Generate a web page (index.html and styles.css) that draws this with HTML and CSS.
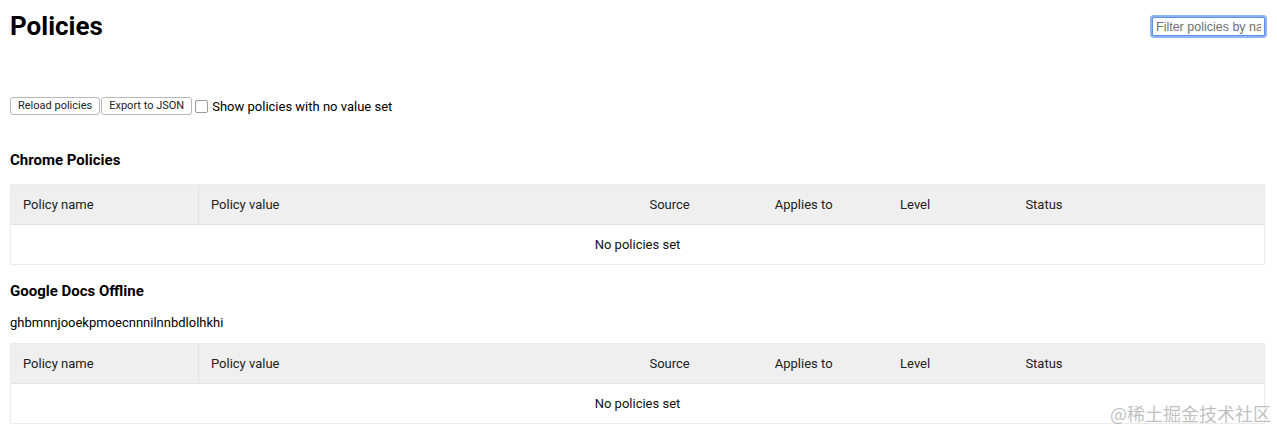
FILE: index.html
```html
<!DOCTYPE html>
<html>
<head>
<meta charset="utf-8">
<link rel="stylesheet" href="styles.css">
</head>
<body>
<div class="page">
  <header class="top">
    <h1 class="title">Policies</h1>
    <input class="filter" type="text" placeholder="Filter policies by name">
  </header>
  <div class="controls">
    <button class="btn">Reload policies</button>
    <button class="btn">Export to JSON</button>
    <label class="check"><span class="box"></span>Show policies with no value set</label>
  </div>

  <section class="group first">
    <h2 class="group-title">Chrome Policies</h2>
    <div class="table">
      <div class="thead">
        <div class="c name">Policy name</div>
        <div class="c value">Policy value</div>
        <div class="c source">Source</div>
        <div class="c scope">Applies to</div>
        <div class="c level">Level</div>
        <div class="c status">Status</div>
      </div>
      <div class="empty">No policies set</div>
    </div>
  </section>

  <section class="group">
    <h2 class="group-title">Google Docs Offline</h2>
    <div class="ext-id">ghbmnnjooekpmoecnnnilnnbdlolhkhi</div>
    <div class="table">
      <div class="thead">
        <div class="c name">Policy name</div>
        <div class="c value">Policy value</div>
        <div class="c source">Source</div>
        <div class="c scope">Applies to</div>
        <div class="c level">Level</div>
        <div class="c status">Status</div>
      </div>
      <div class="empty">No policies set</div>
    </div>
  </section>
</div>
<div class="watermark">@稀土掘金技术社区</div>
</body>
</html>
```
FILE: styles.css
```css
html, body {
  margin: 0;
  padding: 0;
  background: #fff;
}
body {
  font-family: Roboto, "Liberation Sans", sans-serif;
  color: #000;
  position: relative;
  height: 430px;
  overflow: hidden;
}
.page {
  padding: 0 12px 0 10px;
}
.top {
  display: flex;
  justify-content: space-between;
  align-items: flex-start;
}
.title {
  margin: 11px 0 0 0;
  font-size: 26px;
  line-height: 30px;
  font-weight: 700;
}
.filter {
  margin-top: 17px;
  width: 113px;
  height: 19px;
  box-sizing: border-box;
  border: 1px solid #5b8fe8;
  border-radius: 2px;
  box-shadow: 0 0 0 2px #8fb3f2;
  outline: none;
  padding: 0 3px;
  font-family: "Liberation Sans", Roboto, sans-serif;
  font-size: 12.5px;
  color: #000;
}
.filter::placeholder {
  color: #6f6f6f;
}
.controls {
  margin-top: 56px;
  display: flex;
  align-items: center;
  height: 18px;
}
.btn {
  height: 18px;
  box-sizing: border-box;
  margin: 0 1px 0 0;
  padding: 0 7px;
  border: 1px solid #b8b8b8;
  border-radius: 3px;
  background: #fff;
  font-family: Roboto, "Liberation Sans", sans-serif;
  font-size: 11px;
  color: #222;
  line-height: 16px;
}
.btn + .btn {
  margin-right: 0;
}
.check {
  display: flex;
  align-items: center;
  margin-left: 3px;
  font-size: 13px;
  color: #000;
}
.box {
  width: 11px;
  height: 11px;
  border: 1px solid #9a9a9a;
  border-radius: 2px;
  background: #fff;
  margin-right: 4px;
}
.group.first {
  margin-top: 36px;
}
.group {
  margin-top: 17px;
}
.group-title {
  margin: 0;
  font-size: 15px;
  line-height: 18px;
  font-weight: 700;
}
.group.first .group-title {
  margin-bottom: 15px;
}
.ext-id {
  margin-top: 14px;
  margin-bottom: 11px;
  font-size: 13px;
  line-height: 18px;
}
.table {
  border: 1px solid #ececec;
}
.thead {
  display: grid;
  grid-template-columns: 15% 35% 10% 10% 10% 20%;
  background: #efefef;
  border-bottom: 1px solid #e2e2e2;
  height: 40px;
  box-sizing: border-box;
}
.c {
  padding-left: 12px;
  font-size: 13px;
  color: #222;
  display: flex;
  align-items: center;
}
.c.name {
  border-right: 1px solid #e2e2e2;
}
.empty {
  height: 39px;
  display: flex;
  align-items: center;
  justify-content: center;
  font-size: 13px;
  color: #111;
}
.watermark {
  position: absolute;
  right: 6px;
  bottom: 6px;
  font-family: "Noto Sans CJK SC", sans-serif;
  font-size: 18px;
  line-height: 22px;
  color: rgba(150,150,150,0.6);
}
```
